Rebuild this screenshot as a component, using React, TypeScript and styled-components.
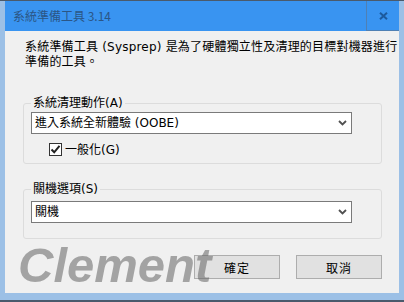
import React from "react";
import styled, { createGlobalStyle } from "styled-components";

const GlobalStyle = createGlobalStyle`
  html, body {
    margin: 0;
    padding: 0;
    background: #ffffff;
  }
  * {
    box-sizing: border-box;
  }
`;

// Latin glyphs from DejaVu are about as wide as the dialog font; CJK from Noto
const uiFont = `"DejaVu Sans", "Noto Sans CJK TC", sans-serif`;

const Window = styled.div`
  width: 404px;
  height: 302px;
  display: flex;
  flex-direction: column;
  background: #9cc0e6;
  border-top: 1px solid #4a5a6c;
  border-bottom: 2px solid #4a5a6c;
  padding: 0 5px 7px 5px;
  font-family: ${uiFont};
  font-size: 12px;
  color: #000;
`;

const TitleBar = styled.div`
  height: 30px;
  flex: none;
  display: flex;
  align-items: stretch;
  background: #3994f1;
`;

const TitleText = styled.div`
  flex: 1;
  display: flex;
  align-items: center;
  padding-left: 8px;
  color: #2b5686;
  font-family: "Noto Sans CJK TC", sans-serif;
  font-size: 12px;
  line-height: 14px;
`;

const CloseButton = styled.div`
  width: 33px;
  display: flex;
  align-items: center;
  justify-content: center;
  border-left: 1px solid #4f80b4;
  border-bottom: 1px solid #4f80b4;
  padding-left: 1px;
`;

const Client = styled.div`
  position: relative;
  flex: 1;
  background: #f0f0f0;
  padding: 9px 17px 0 18px;
  display: flex;
  flex-direction: column;
`;

const Intro = styled.p`
  margin: 0 0 0 2px;
  font-size: 12px;
  line-height: 15px;
  letter-spacing: 0.2px;
  white-space: nowrap;
`;

const IntroLine = styled.span`
  display: block;
  height: 15px;
`;

const Group = styled.fieldset<{ $top: number; $padTop: number; $padBottom: number }>`
  margin: ${(p) => p.$top}px 0 0 0;
  padding: ${(p) => p.$padTop}px 7px ${(p) => p.$padBottom}px 7px;
  border: 1px solid #dcdcdc;
  border-radius: 3px;
  min-width: 0;
`;

const Legend = styled.legend`
  padding: 0 2px;
  margin-left: 0;
  font-size: 12px;
  line-height: 14px;
`;

const Select = styled.div`
  width: 321px;
  height: 22px;
  background: #ffffff;
  border: 1px solid #7a7a7a;
  display: flex;
  align-items: center;
  justify-content: space-between;
  padding: 0 4px 0 3px;
  font-size: 12px;
  line-height: 14px;
`;

const CheckRow = styled.label`
  display: flex;
  align-items: center;
  gap: 3px;
  margin: 9px 0 0 18px;
  height: 13px;
  font-size: 12px;
  line-height: 14px;
`;

const CheckBox = styled.span`
  width: 13px;
  height: 13px;
  border: 1px solid #333333;
  background: #ffffff;
  display: flex;
  align-items: center;
  justify-content: center;
`;

const ButtonRow = styled.div`
  display: flex;
  justify-content: flex-end;
  gap: 16px;
  margin-top: 16px;
`;

const Button = styled.div`
  width: 86px;
  height: 24px;
  background: #e1e1e1;
  border: 1px solid #adadad;
  display: flex;
  align-items: center;
  justify-content: center;
  font-size: 12px;
  letter-spacing: 1px;
`;

const Watermark = styled.div`
  position: absolute;
  left: 13px;
  top: 209px;
  font-family: "Liberation Sans", Arial, sans-serif;
  font-weight: bold;
  font-style: italic;
  font-size: 49px;
  line-height: 50px;
  color: rgba(100, 100, 100, 0.55);
  pointer-events: none;
`;

const Chevron = () => (
  <svg width="9" height="6" viewBox="0 0 9 6">
    <path d="M1 1 L4.5 4.5 L8 1" fill="none" stroke="#505050" strokeWidth="1.8" />
  </svg>
);

const CheckMark = () => (
  <svg width="11" height="11" viewBox="0 0 11 11">
    <path d="M1.5 5.5 L4.2 8.3 L9.5 1.8" fill="none" stroke="#222" strokeWidth="2" />
  </svg>
);

const CloseGlyph = () => (
  <svg width="9" height="8" viewBox="0 0 9 8">
    <path d="M1 0.8 L8 7.2 M8 0.8 L1 7.2" stroke="#1c5a9e" strokeWidth="2" />
  </svg>
);

export default function App() {
  return (
    <div lang="zh-Hant-TW">
      <GlobalStyle />
      <Window>
        <TitleBar>
          <TitleText>系統準備工具 3.14</TitleText>
          <CloseButton>
            <CloseGlyph />
          </CloseButton>
        </TitleBar>
        <Client>
          <Intro>
            <IntroLine>系統準備工具 (Sysprep) 是為了硬體獨立性及清理的目標對機器進行</IntroLine>
            <IntroLine>準備的工具。</IntroLine>
          </Intro>
          <Group $top={26} $padTop={2} $padBottom={7}>
            <Legend>系統清理動作(A)</Legend>
            <Select>
              <span>進入系統全新體驗 (OOBE)</span>
              <Chevron />
            </Select>
            <CheckRow>
              <CheckBox>
                <CheckMark />
              </CheckBox>
              一般化(G)
            </CheckRow>
          </Group>
          <Group $top={18} $padTop={5} $padBottom={15}>
            <Legend>關機選項(S)</Legend>
            <Select>
              <span>關機</span>
              <Chevron />
            </Select>
          </Group>
          <ButtonRow>
            <Button>確定</Button>
            <Button>取消</Button>
          </ButtonRow>
          <Watermark>Clement</Watermark>
        </Client>
      </Window>
    </div>
  );
}
